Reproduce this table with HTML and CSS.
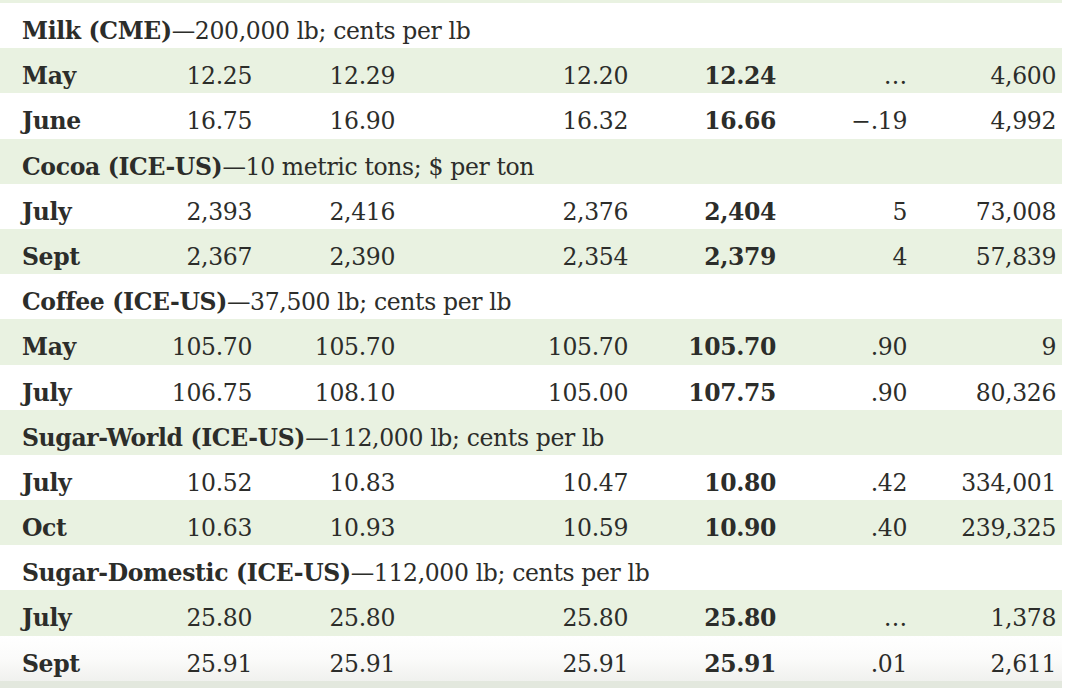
FILE: index.html
```html
<!DOCTYPE html>
<html lang="en">
<head>
<meta charset="utf-8">
<title>Futures prices</title>
<link rel="stylesheet" href="styles.css">
</head>
<body>
<div class="sheet">
  <div class="strip"></div>

  <div class="row head"><div class="title"><b>Milk (CME)</b>—200,000 lb; cents per lb</div></div>
  <div class="row alt"><div class="lbl">May</div><div class="n">12.25</div><div class="n">12.29</div><div class="n">12.20</div><div class="n s">12.24</div><div class="n">…</div><div class="n last">4,600</div></div>
  <div class="row"><div class="lbl">June</div><div class="n">16.75</div><div class="n">16.90</div><div class="n">16.32</div><div class="n s">16.66</div><div class="n">−.19</div><div class="n last">4,992</div></div>

  <div class="row head alt"><div class="title"><b>Cocoa (ICE-US)</b>—10 metric tons; $ per ton</div></div>
  <div class="row"><div class="lbl">July</div><div class="n">2,393</div><div class="n">2,416</div><div class="n">2,376</div><div class="n s">2,404</div><div class="n">5</div><div class="n last">73,008</div></div>
  <div class="row alt"><div class="lbl">Sept</div><div class="n">2,367</div><div class="n">2,390</div><div class="n">2,354</div><div class="n s">2,379</div><div class="n">4</div><div class="n last">57,839</div></div>

  <div class="row head"><div class="title"><b>Coffee (ICE-US)</b>—37,500 lb; cents per lb</div></div>
  <div class="row alt"><div class="lbl">May</div><div class="n">105.70</div><div class="n">105.70</div><div class="n">105.70</div><div class="n s">105.70</div><div class="n">.90</div><div class="n last">9</div></div>
  <div class="row"><div class="lbl">July</div><div class="n">106.75</div><div class="n">108.10</div><div class="n">105.00</div><div class="n s">107.75</div><div class="n">.90</div><div class="n last">80,326</div></div>

  <div class="row head alt"><div class="title"><b>Sugar-World (ICE-US)</b>—112,000 lb; cents per lb</div></div>
  <div class="row"><div class="lbl">July</div><div class="n">10.52</div><div class="n">10.83</div><div class="n">10.47</div><div class="n s">10.80</div><div class="n">.42</div><div class="n last">334,001</div></div>
  <div class="row alt"><div class="lbl">Oct</div><div class="n">10.63</div><div class="n">10.93</div><div class="n">10.59</div><div class="n s">10.90</div><div class="n">.40</div><div class="n last">239,325</div></div>

  <div class="row head"><div class="title"><b>Sugar-Domestic (ICE-US)</b>—112,000 lb; cents per lb</div></div>
  <div class="row alt"><div class="lbl">July</div><div class="n">25.80</div><div class="n">25.80</div><div class="n">25.80</div><div class="n s">25.80</div><div class="n">…</div><div class="n last">1,378</div></div>
  <div class="row fade"><div class="lbl">Sept</div><div class="n">25.91</div><div class="n">25.91</div><div class="n">25.91</div><div class="n s">25.91</div><div class="n">.01</div><div class="n last">2,611</div></div>

  <div class="bottom"></div>
</div>
</body>
</html>
```
FILE: styles.css
```css
html, body {
  margin: 0;
  padding: 0;
  background: #ffffff;
}

body {
  width: 1078px;
  height: 688px;
  overflow: hidden;
  font-family: "DejaVu Serif", "Liberation Serif", serif;
  font-size: 23.5px;
  letter-spacing: -0.35px;
  color: #2c2d2a;
}

.sheet {
  width: 1062px;
  display: flex;
  flex-direction: column;
}

.strip {
  height: 3px;
  background: #e9f2e1;
}

.row {
  height: 45.2px;
  box-sizing: border-box;
  display: grid;
  grid-template-columns: 120px 142px 143px 233px 148px 131px 145px;
  padding-top: 11px;
  line-height: 34px;
  background: #ffffff;
  white-space: nowrap;
}

.row.alt {
  background: #e9f2e1;
}

.row.head {
  display: block;
}

.title {
  padding-left: 22px;
}

.title b {
  font-weight: 700;
}

.lbl {
  padding-left: 22px;
  font-weight: 700;
}

.n {
  text-align: right;
  padding-right: 10px;
}

.n.last {
  padding-right: 6px;
}

.n.s {
  font-weight: 700;
}

.row.fade {
  background: linear-gradient(to bottom, #ffffff 0%, #fbfbfa 50%, #f0f1ee 100%);
}

.bottom {
  height: 8px;
  background: #e3e8de;
}
```
